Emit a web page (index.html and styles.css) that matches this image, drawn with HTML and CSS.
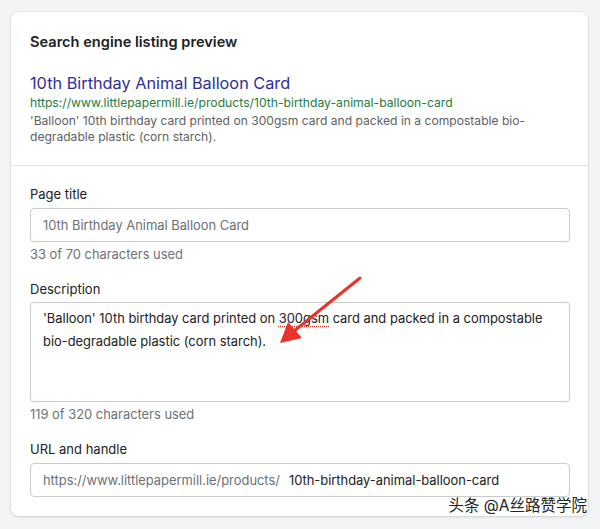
FILE: index.html
```html
<!DOCTYPE html>
<html lang="en">
<head>
<meta charset="utf-8">
<title>Search engine listing preview</title>
<link rel="stylesheet" href="styles.css">
</head>
<body>
<div class="card">
  <section class="preview">
    <h2 class="heading">Search engine listing preview</h2>
    <div class="serp-title">10th Birthday Animal Balloon Card</div>
    <div class="serp-url">https://www.littlepapermill.ie/products/10th-birthday-animal-balloon-card</div>
    <div class="serp-desc">'Balloon' 10th birthday card printed on 300gsm card and packed in a compostable bio-degradable plastic (corn starch).</div>
  </section>
  <section class="fields">
    <div class="label">Page title</div>
    <div class="input muted">10th Birthday Animal Balloon Card</div>
    <div class="help">33 of 70 characters used</div>

    <div class="label gap">Description</div>
    <div class="textarea">'Balloon' 10th birthday card printed on <span class="spell">300gsm</span> card and packed in a compostable bio-degradable plastic (corn starch).</div>
    <div class="help">119 of 320 characters used</div>

    <div class="label gap">URL and handle</div>
    <div class="input url"><span class="prefix">https://www.littlepapermill.ie/products/</span><span class="handle">10th-birthday-animal-balloon-card</span></div>
  </section>
  <div class="watermark">头条 @A丝路赞学院</div>
</div>
<svg class="arrow" width="600" height="529" viewBox="0 0 600 529">
  <line x1="360" y1="278" x2="294" y2="331" stroke="#e8342a" stroke-width="3" stroke-linecap="round"/>
  <polygon points="280,343 288,322 302,338" fill="#e8342a"/>
</svg>
</body>
</html>
```
FILE: styles.css
```css
* { box-sizing: border-box; }
html, body { margin: 0; padding: 0; }
body {
  background: #f3f4f6;
  font-family: Inter, "Noto Sans", "Noto Sans CJK SC", sans-serif;
  color: #202223;
  width: 600px;
  height: 529px;
  padding: 12px 12px 0 11px;
  position: relative;
  overflow: hidden;
}
.card {
  position: relative;
  width: 577px;
  background: #fff;
  border-radius: 8px;
  box-shadow: 0 0 0 1px rgba(63,63,68,0.06), 0 1px 3px rgba(63,63,68,0.15);
}
.preview {
  padding: 20px 18px 20px 19px;
  border-bottom: 1px solid #e1e3e5;
}
.heading {
  margin: 0;
  font-size: 14.6px;
  line-height: 20px;
  font-weight: 600;
  color: #202223;
}
.serp-title {
  margin-top: 20px;
  font-size: 16.3px;
  line-height: 22px;
  color: #2e2e9a;
}
.serp-url {
  font-size: 12.2px;
  line-height: 17px;
  color: #287a3e;
}
.serp-desc {
  margin-top: 2px;
  font-size: 12.1px;
  line-height: 16px;
  color: #5c5f62;
  padding-right: 20px;
}
.fields {
  padding: 18px 18px 19px 19px;
}
.label {
  font-size: 13px;
  line-height: 20px;
  color: #202223;
}
.label.gap { margin-top: 14px; }
.input {
  margin-top: 4px;
  height: 34px;
  border: 1px solid #c9cccf;
  border-radius: 4px;
  padding: 0 12px;
  display: flex;
  align-items: center;
  font-size: 12.9px;
  color: #202223;
  white-space: nowrap;
}
.input.muted { color: #6d7175; }
.textarea {
  margin-top: 3px;
  height: 100px;
  border: 1px solid #c9cccf;
  border-radius: 4px;
  padding: 4px 12px;
  font-size: 12.9px;
  line-height: 23px;
  color: #202223;
}
.spell {
  text-decoration: underline dotted #e03c31;
  text-underline-offset: 3px;
}
.help {
  margin-top: 3px;
  font-size: 12.9px;
  line-height: 20px;
  color: #6d7175;
}
.prefix { color: #6d7175; }
.handle { margin-left: 9px; color: #202223; }
.watermark {
  position: absolute;
  right: 1px;
  bottom: 1px;
  font-size: 15.5px;
  line-height: 18px;
  color: #222;
  text-shadow: 0 0 2px #fff, 0 0 2px #fff;
}
.arrow {
  position: absolute;
  left: 0;
  top: 0;
  pointer-events: none;
}
```
